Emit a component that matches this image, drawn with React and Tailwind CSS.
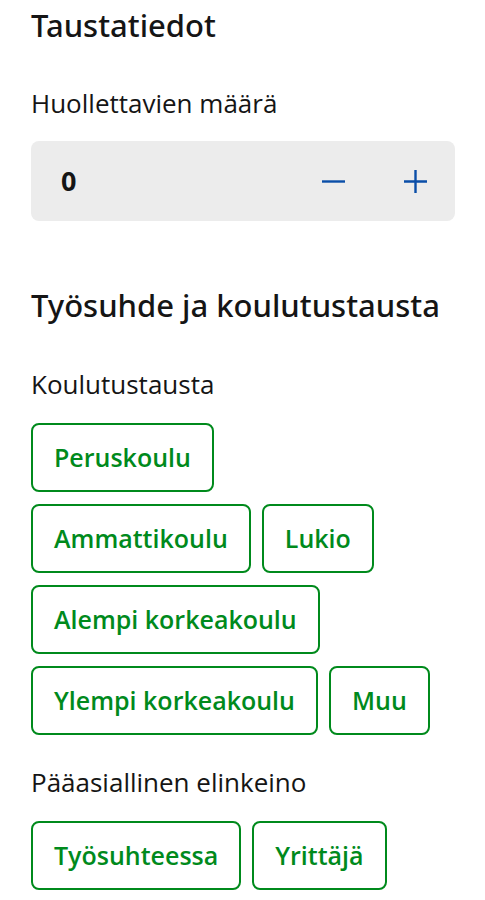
import React from "react";

const Btn = ({ children }) => (
  <button className="h-[69px] px-[21px] rounded-[8px] border-2 border-[#008a1c] text-[#008a1c] font-semibold text-[25px] leading-none bg-white">
    {children}
  </button>
);

const H = ({ children, className }) => (
  <h2 className={"text-[31px] font-medium leading-[36px] " + className} style={{ fontFamily: '"Noto Sans", "Open Sans", sans-serif' }}>
    {children}
  </h2>
);

export default function App() {
  return (
    <div className="bg-white min-h-[900px] px-[31px] pt-[7px] text-[#151515]" style={{ fontFamily: '"Open Sans", "Noto Sans", sans-serif' }}>
      <H className="">Taustatiedot</H>
      <div className="mt-[44px] text-[26px] leading-[32px]">Huollettavien määrä</div>
      <div className="mt-[22px] h-[80px] w-[424px] rounded-[8px] bg-[#ececec] flex items-center pl-[30px] pr-[28px]">
        <span className="text-[27px] font-bold flex-1">0</span>
        <svg width="23" height="23" viewBox="0 0 23 23" className="text-[#0a4ea8]">
          <path d="M0 11.5h23" stroke="currentColor" strokeWidth="2.4" />
        </svg>
        <svg width="23" height="23" viewBox="0 0 23 23" className="ml-[59px] text-[#0a4ea8]">
          <path d="M0 11.5h23M11.5 0v23" stroke="currentColor" strokeWidth="2.4" />
        </svg>
      </div>
      <H className="mt-[66px]">Työsuhde ja koulutustausta</H>
      <div className="mt-[45px] text-[26px] leading-[32px]">Koulutustausta</div>
      <div className="mt-[23px] flex flex-col gap-[12px]">
        <div className="flex gap-[11px]"><Btn>Peruskoulu</Btn></div>
        <div className="flex gap-[11px]"><Btn>Ammattikoulu</Btn><Btn>Lukio</Btn></div>
        <div className="flex gap-[11px]"><Btn>Alempi korkeakoulu</Btn></div>
        <div className="flex gap-[11px]"><Btn>Ylempi korkeakoulu</Btn><Btn>Muu</Btn></div>
      </div>
      <div className="mt-[31px] text-[26px] leading-[32px]">Pääasiallinen elinkeino</div>
      <div className="mt-[23px] flex gap-[11px]"><Btn>Työsuhteessa</Btn><Btn>Yrittäjä</Btn></div>
    </div>
  );
}
